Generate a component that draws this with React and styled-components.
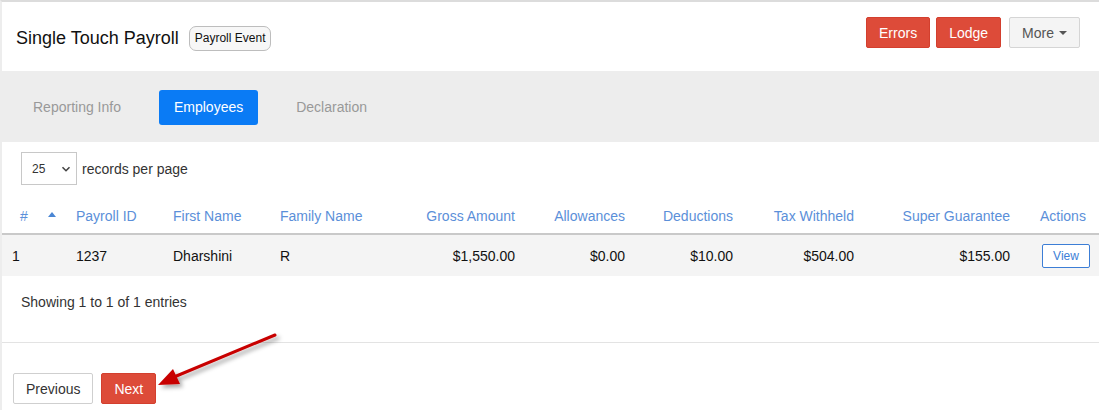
import React from 'react';
import styled, { createGlobalStyle } from 'styled-components';

const GlobalStyle = createGlobalStyle`
  html, body {
    margin: 0;
    padding: 0;
    background: #fff;
  }
  body {
    font-family: "Liberation Sans", Arial, sans-serif;
    font-size: 14px;
    color: #333;
  }
  * {
    box-sizing: border-box;
  }
`;

const Page = styled.div`
  position: relative;
  width: 1099px;
  height: 410px;
  overflow: hidden;
  border-top: 2px solid #dcdcdc;
  border-left: 2px solid #ededed;
  background: #fff;
`;

const Header = styled.div`
  height: 69px;
  display: flex;
  justify-content: space-between;
  align-items: flex-start;
  padding: 15px 19px 0 14px;
`;

const TitleGroup = styled.div`
  display: flex;
  align-items: center;
  height: 26px;
  margin-top: 8px;
`;

const Title = styled.h1`
  margin: 0;
  font-size: 18px;
  font-weight: normal;
  color: #111;
`;

const Badge = styled.span`
  margin-left: 10px;
  height: 25px;
  display: inline-flex;
  align-items: center;
  padding: 0 5px;
  font-size: 12px;
  color: #111;
  background: #f7f7f7;
  border: 1px solid #bdbdbd;
  border-radius: 7px;
`;

const ButtonGroup = styled.div`
  display: flex;
  gap: 6px;
`;

const Button = styled.button`
  height: 31px;
  padding: 0 12px;
  font-family: inherit;
  font-size: 14px;
  border-radius: 2px;
  display: inline-flex;
  align-items: center;
  cursor: pointer;
  border: 1px solid ${(p) => (p.danger ? '#d33f2e' : '#d5d5d5')};
  background: ${(p) => (p.danger ? '#dd4b39' : '#f4f4f4')};
  color: ${(p) => (p.danger ? '#fff' : '#555')};
  margin-left: ${(p) => (p.spaced ? '2px' : '0')};
`;

const Caret = styled.span`
  margin-left: 5px;
  width: 0;
  height: 0;
  border-left: 4px solid transparent;
  border-right: 4px solid transparent;
  border-top: 4px solid #555;
`;

const TabBar = styled.div`
  height: 71px;
  background: #ededed;
  display: flex;
  align-items: center;
  gap: 23px;
  padding-left: 16px;
  padding-top: 1px;
`;

const Tab = styled.div`
  height: 35px;
  padding: 0 15px;
  display: flex;
  align-items: center;
  font-size: 14px;
  border-radius: 3px;
  color: ${(p) => (p.active ? '#fff' : '#999')};
  background: ${(p) => (p.active ? '#0a7bf5' : 'transparent')};
`;

const Content = styled.div`
  padding-top: 10px;
`;

const LengthRow = styled.div`
  display: flex;
  align-items: center;
  padding-left: 19px;
  gap: 5px;
`;

const SelectBox = styled.div`
  width: 56px;
  height: 33px;
  border: 1px solid #c8c8c8;
  display: flex;
  align-items: center;
  justify-content: space-between;
  padding: 0 5px 0 10px;
  font-size: 12px;
  color: #333;
`;

const Table = styled.table`
  margin-top: 13px;
  width: 1097px;
  border-collapse: collapse;
  table-layout: fixed;
`;

const Th = styled.th`
  height: 36px;
  padding: 0 8px;
  padding-left: ${(p) => p.pl || '8px'};
  font-weight: normal;
  font-size: 14px;
  color: #5b8fd9;
  text-align: ${(p) => (p.right ? 'right' : 'left')};
  border-bottom: 2px solid #c9c9c9;
  white-space: nowrap;
`;

const Row = styled.tr`
  background: #f4f4f4;
`;

const Td = styled.td`
  height: 42px;
  padding: 0 8px;
  padding-left: ${(p) => p.pl || '8px'};
  font-size: 14px;
  color: #111;
  text-align: ${(p) => (p.right ? 'right' : 'left')};
`;

const SortUp = styled.span`
  display: inline-block;
  margin-left: 20px;
  vertical-align: 4px;
  width: 0;
  height: 0;
  border-left: 4px solid transparent;
  border-right: 4px solid transparent;
  border-bottom: 5px solid #4a86d4;
`;

const ViewButton = styled.button`
  width: 48px;
  height: 24px;
  padding: 0;
  font-family: inherit;
  font-size: 12px;
  color: #3c7ed6;
  background: #fff;
  border: 1px solid #3c7ed6;
  border-radius: 2px;
`;

const Info = styled.div`
  padding: 16px 0 0 19px;
  line-height: 20px;
  height: 66px;
`;

const Divider = styled.div`
  border-top: 1px solid #e3e3e3;
`;

const Pagination = styled.div`
  display: flex;
  gap: 8px;
  padding: 30px 0 0 11px;
`;

const PageButton = styled.button`
  height: 31px;
  padding: 0 12px;
  font-family: inherit;
  font-size: 14px;
  border-radius: 2px;
  border: 1px solid ${(p) => (p.danger ? '#d33f2e' : '#cfcfcf')};
  background: ${(p) => (p.danger ? '#dd4b39' : '#fff')};
  color: ${(p) => (p.danger ? '#fff' : '#333')};
`;

const ArrowLayer = styled.svg`
  position: absolute;
  left: 0;
  top: 0;
  pointer-events: none;
`;

const columns = [
  { label: '#', width: 66 },
  { label: 'Payroll ID', width: 97 },
  { label: 'First Name', width: 107 },
  { label: 'Family Name', width: 128 },
  { label: 'Gross Amount', width: 123, right: true },
  { label: 'Allowances', width: 110, right: true },
  { label: 'Deductions', width: 108, right: true },
  { label: 'Tax Withheld', width: 121, right: true },
  { label: 'Super Guarantee', width: 156, right: true },
  { label: 'Actions', width: 81 },
];

const rows = [
  {
    id: 1,
    payrollId: '1237',
    first: 'Dharshini',
    family: 'R',
    gross: '$1,550.00',
    allowances: '$0.00',
    deductions: '$10.00',
    tax: '$504.00',
    sg: '$155.00',
  },
];

function Chevron() {
  return (
    <svg width="10" height="10" viewBox="0 0 10 10">
      <path d="M1.5 3.2 L5 6.7 L8.5 3.2" fill="none" stroke="#444" strokeWidth="1.6" />
    </svg>
  );
}

function Annotation() {
  return (
    <ArrowLayer width="1099" height="410">
      <defs>
        <filter id="sh" x="-20%" y="-20%" width="140%" height="140%">
          <feDropShadow dx="3" dy="3" stdDeviation="2" floodColor="#000" floodOpacity="0.35" />
        </filter>
      </defs>
      <g filter="url(#sh)">
        <line x1="273" y1="333" x2="172" y2="375" stroke="#c80000" strokeWidth="3" strokeLinecap="round" />
        <polygon points="156,383 171,367 178,382" fill="#c80000" />
      </g>
    </ArrowLayer>
  );
}

export default function App() {
  return (
    <>
      <GlobalStyle />
      <Page>
        <Header>
          <TitleGroup>
            <Title>Single Touch Payroll</Title>
            <Badge>Payroll Event</Badge>
          </TitleGroup>
          <ButtonGroup>
            <Button danger>Errors</Button>
            <Button danger>Lodge</Button>
            <Button spaced>
              More
              <Caret />
            </Button>
          </ButtonGroup>
        </Header>
        <TabBar>
          <Tab>Reporting Info</Tab>
          <Tab active>Employees</Tab>
          <Tab>Declaration</Tab>
        </TabBar>
        <Content>
          <LengthRow>
            <SelectBox>
              25
              <Chevron />
            </SelectBox>
            records per page
          </LengthRow>
          <Table>
            <colgroup>
              {columns.map((c) => (
                <col key={c.label} style={{ width: c.width }} />
              ))}
            </colgroup>
            <thead>
              <tr>
                {columns.map((c, i) => (
                  <Th key={c.label} right={c.right} pl={i === 0 ? '18px' : i === 9 ? '22px' : undefined}>
                    {c.label}
                    {i === 0 && <SortUp />}
                  </Th>
                ))}
              </tr>
            </thead>
            <tbody>
              {rows.map((r) => (
                <Row key={r.id}>
                  <Td pl="10px">{r.id}</Td>
                  <Td>{r.payrollId}</Td>
                  <Td>{r.first}</Td>
                  <Td>{r.family}</Td>
                  <Td right>{r.gross}</Td>
                  <Td right>{r.allowances}</Td>
                  <Td right>{r.deductions}</Td>
                  <Td right>{r.tax}</Td>
                  <Td right>{r.sg}</Td>
                  <Td pl="24px">
                    <ViewButton>View</ViewButton>
                  </Td>
                </Row>
              ))}
            </tbody>
          </Table>
          <Info>Showing 1 to 1 of 1 entries</Info>
          <Divider />
          <Pagination>
            <PageButton>Previous</PageButton>
            <PageButton danger>Next</PageButton>
          </Pagination>
        </Content>
        <Annotation />
      </Page>
    </>
  );
}
